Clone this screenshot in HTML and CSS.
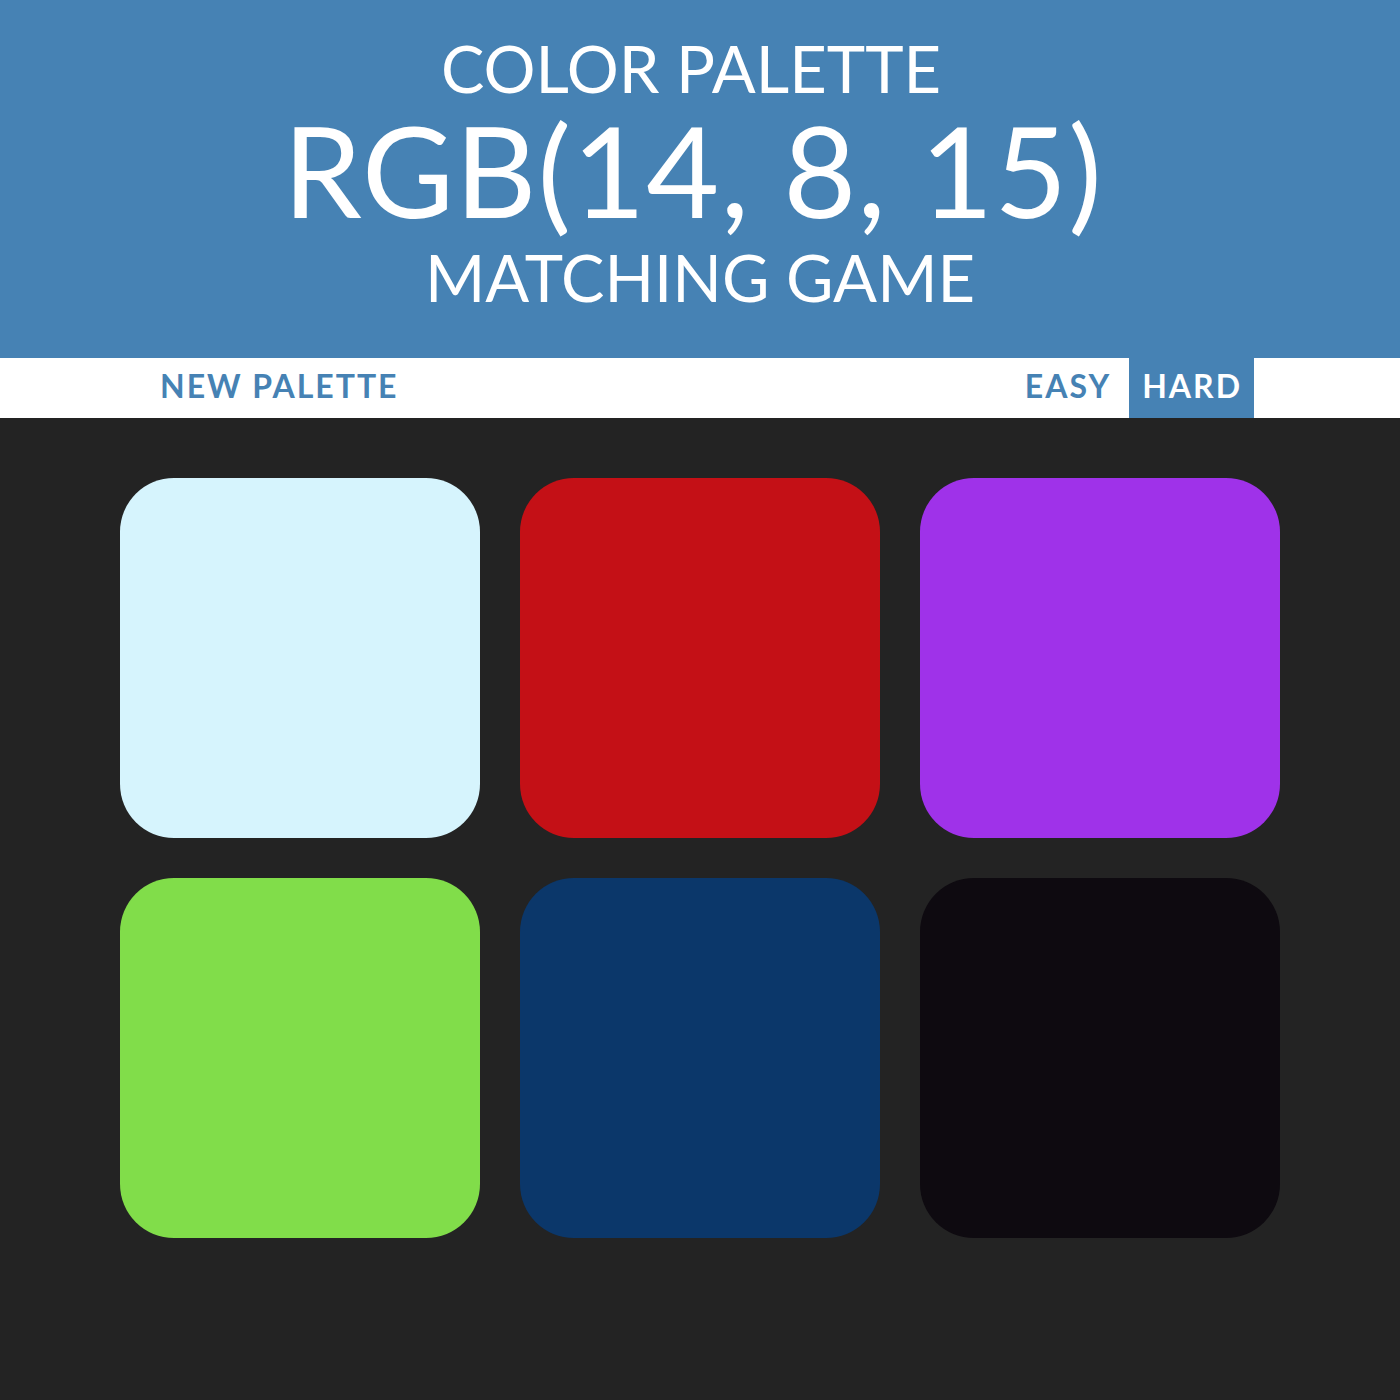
FILE: index.html
```
<!DOCTYPE html>
<html lang="en">
<head>
<meta charset="utf-8">
<title>Color Game</title>
<link rel="stylesheet" href="styles.css">
</head>
<body>
<header class="hero">
  <div class="hero-line hero-top">Color Palette</div>
  <div class="hero-line hero-rgb">RGB(14, 8, 15)</div>
  <div class="hero-line hero-bottom">Matching Game</div>
</header>
<nav class="stripe">
  <button class="btn">New Palette</button>
  <div class="modes">
    <button class="btn">Easy</button>
    <button class="btn selected">Hard</button>
  </div>
</nav>
<main class="board">
  <div class="square sq-1"></div>
  <div class="square sq-2"></div>
  <div class="square sq-3"></div>
  <div class="square sq-4"></div>
  <div class="square sq-5"></div>
  <div class="square sq-6"></div>
</main>
</body>
</html>
```
FILE: styles.css
```
* { box-sizing: border-box; }
html, body {
  margin: 0;
  padding: 0;
  background: #232323;
  font-family: "Lato", "Open Sans", sans-serif;
  height: 100%;
}
.hero {
  background: #4682b4;
  color: #ffffff;
  text-align: center;
  padding: 32px 0 39px;
  text-transform: uppercase;
}
.hero-line { font-weight: 400; white-space: nowrap; }
.hero-top { font-size: 65px; line-height: 72px; padding-right: 18px; }
.hero-rgb { font-size: 126px; line-height: 131px; letter-spacing: 1px; padding-right: 14px; }
.hero-bottom { font-size: 65px; line-height: 84px; }

.stripe {
  background: #ffffff;
  height: 60px;
  display: flex;
  justify-content: space-between;
  padding: 0 146px 0 147px;
}
.modes { display: flex; gap: 6px; }
.btn {
  border: none;
  background: none;
  margin: 0;
  height: 60px;
  padding: 0 13px 5px;
  line-height: 55px;
  font-family: "Lato", "Open Sans", sans-serif;
  font-weight: 700;
  font-size: 32px;
  letter-spacing: 2px;
  text-transform: uppercase;
  color: #4682b4;
}
.modes .btn { padding: 0 12px 5px 13px; }
.btn.selected { background: #4682b4; color: #ffffff; }

.board {
  width: 1200px;
  margin: 40px auto 0;
  display: grid;
  grid-template-columns: repeat(3, 360px);
  gap: 40px;
  padding: 20px;
}
.square {
  width: 360px;
  height: 360px;
  border-radius: 54px;
}
.sq-1 { background: #d6f4fd; }
.sq-2 { background: #c41016; }
.sq-3 { background: #9f32e9; }
.sq-4 { background: #81dd4a; }
.sq-5 { background: #0b376a; }
.sq-6 { background: #0e0a10; }
```
